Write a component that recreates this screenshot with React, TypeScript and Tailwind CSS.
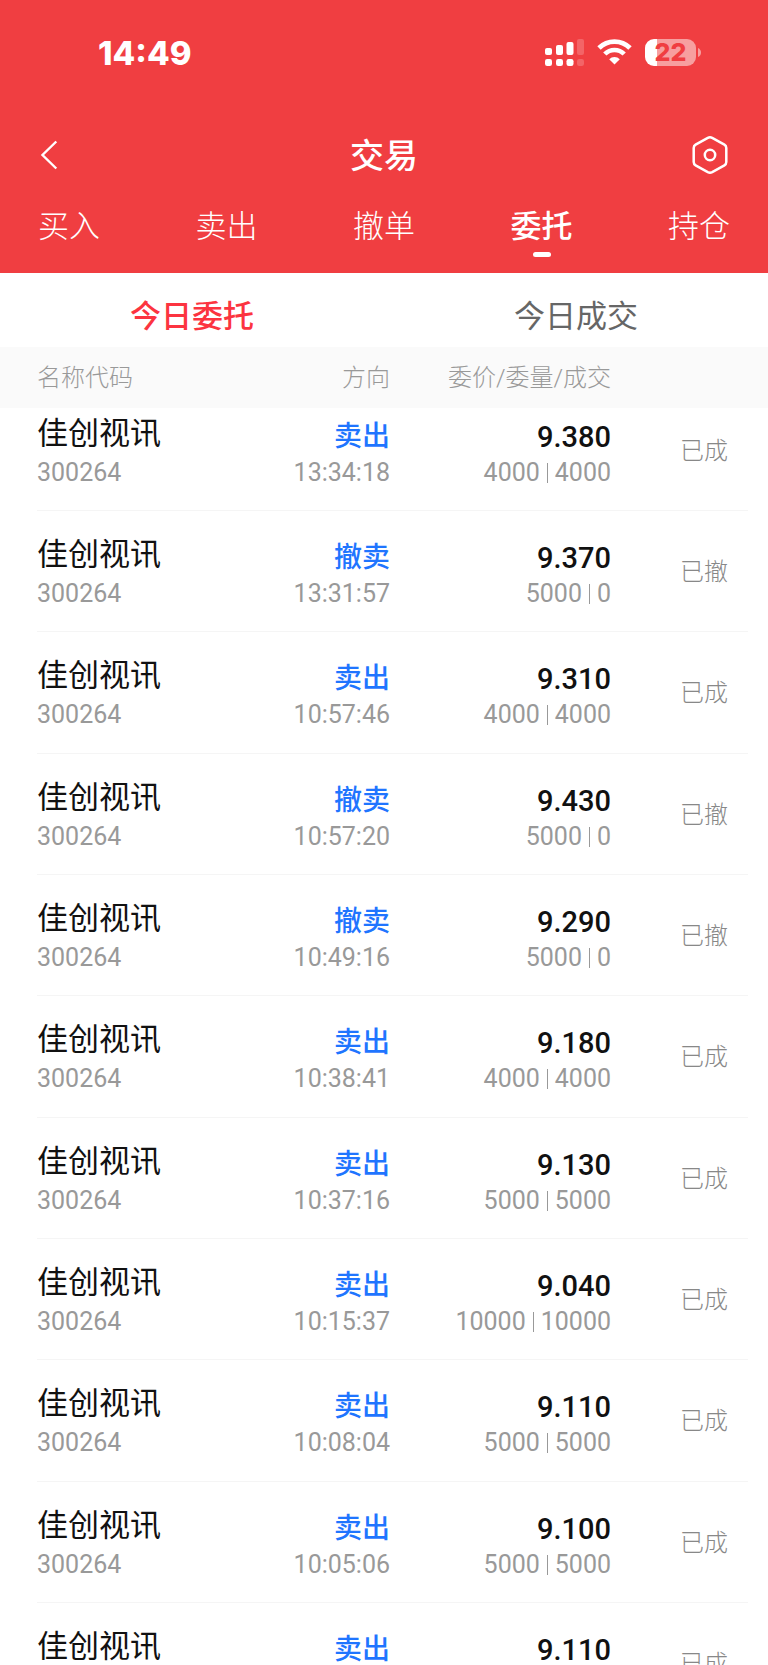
import { useState } from 'react';

type Order = {
  side: string;
  time: string;
  price: string;
  volume: string;
  filled: string;
  status: string;
};

const orders: Order[] = [
  { side: '卖出', time: '13:34:18', price: '9.380', volume: '4000', filled: '4000', status: '已成' },
  { side: '撤卖', time: '13:31:57', price: '9.370', volume: '5000', filled: '0', status: '已撤' },
  { side: '卖出', time: '10:57:46', price: '9.310', volume: '4000', filled: '4000', status: '已成' },
  { side: '撤卖', time: '10:57:20', price: '9.430', volume: '5000', filled: '0', status: '已撤' },
  { side: '撤卖', time: '10:49:16', price: '9.290', volume: '5000', filled: '0', status: '已撤' },
  { side: '卖出', time: '10:38:41', price: '9.180', volume: '4000', filled: '4000', status: '已成' },
  { side: '卖出', time: '10:37:16', price: '9.130', volume: '5000', filled: '5000', status: '已成' },
  { side: '卖出', time: '10:15:37', price: '9.040', volume: '10000', filled: '10000', status: '已成' },
  { side: '卖出', time: '10:08:04', price: '9.110', volume: '5000', filled: '5000', status: '已成' },
  { side: '卖出', time: '10:05:06', price: '9.100', volume: '5000', filled: '5000', status: '已成' },
  { side: '卖出', time: '10:02:31', price: '9.110', volume: '5000', filled: '5000', status: '已成' },
];

const sections = ['买入', '卖出', '撤单', '委托', '持仓'];
const views = ['今日委托', '今日成交'];

function SignalIcon() {
  return (
    <svg width="39" height="27" viewBox="0 0 39 27" fill="#fff" aria-hidden="true">
      <rect x="0" y="9" width="7" height="7" rx="2" />
      <rect x="11" y="6" width="7" height="10" rx="2" />
      <rect x="21.5" y="3" width="7" height="13" rx="2" />
      <rect x="32" y="0" width="7" height="16" rx="2" opacity="0.2" />
      <rect x="0" y="20" width="7" height="7" rx="2.2" />
      <rect x="11" y="20" width="7" height="7" rx="2.2" />
      <rect x="21.5" y="20" width="7" height="7" rx="2.2" />
      <rect x="32" y="20" width="7" height="7" rx="2.2" opacity="0.2" />
    </svg>
  );
}

function WifiIcon() {
  return (
    <svg width="35" height="26" viewBox="0 0 35 26" aria-hidden="true">
      <path d="M2 9 A22 22 0 0 1 33 9" fill="none" stroke="#fff" strokeWidth="4.8" />
      <path d="M7.8 15 A13.7 13.7 0 0 1 27.2 15" fill="none" stroke="#fff" strokeWidth="4.6" />
      <path d="M17.5 25.6 L12.2 20.3 A7.5 7.5 0 0 1 22.8 20.3 Z" fill="#fff" />
    </svg>
  );
}

function Battery() {
  return (
    <div className="flex items-center gap-0.5">
      <div className="flex h-[27px] w-[51px] items-center justify-center rounded-[9px] bg-[linear-gradient(to_right,#fff_12px,#f79f9f_12px)] font-[Inter] text-[25px] leading-none font-extrabold text-[#f03e41]">
        22
      </div>
      <svg width="3" height="9" viewBox="0 0 3 9" aria-hidden="true">
        <path d="M0 0 Q3 1.5 3 4.5 Q3 7.5 0 9 Z" fill="#f79f9f" />
      </svg>
    </div>
  );
}

export default function App() {
  const [section, setSection] = useState('委托');
  const [view, setView] = useState('今日委托');

  return (
    <div className="flex h-screen flex-col overflow-hidden bg-white font-['Roboto','Noto_Sans_CJK_SC',sans-serif]">
      <header className="shrink-0 bg-[#f03e41] text-white">
        <div className="flex h-[104px] items-center justify-between pr-[67px] pl-[98px]">
          <span className="pt-0.5 font-[Inter] text-[33px] leading-none font-extrabold">14:49</span>
          <div className="flex items-center gap-[13px]">
            <SignalIcon />
            <WifiIcon />
            <Battery />
          </div>
        </div>
        <div className="flex h-[100px] items-center justify-between px-10 pt-0.5">
          <button type="button" aria-label="返回" className="w-9">
            <svg width="18" height="30" viewBox="0 0 18 30" fill="none" stroke="#fff" strokeWidth="2.4" aria-hidden="true">
              <path d="M16.3 1.5 L2.5 15 L16.3 28.5" />
            </svg>
          </button>
          <h1 className="pt-0.5 text-[34px] leading-10 font-medium">交易</h1>
          <button type="button" aria-label="设置">
            <svg width="36" height="38" viewBox="0 0 36 38" fill="none" stroke="#fff" strokeWidth="2.5" aria-hidden="true">
              <path d="M15.8 1.9 Q18 0.8 20.2 1.9 L32.4 8.7 Q34.3 9.8 34.3 12 V26 Q34.3 28.2 32.4 29.3 L20.2 36.1 Q18 37.2 15.8 36.1 L3.6 29.3 Q1.7 28.2 1.7 26 V12 Q1.7 9.8 3.6 8.7 Z" />
              <circle cx="18" cy="19" r="5.2" />
            </svg>
          </button>
        </div>
        <nav className="flex h-[69px] justify-between px-[38px]">
          {sections.map((name) => (
            <button
              key={name}
              type="button"
              onClick={() => setSection(name)}
              className={
                'flex flex-col items-center gap-0.5 text-[31px] leading-[46px] ' +
                (name === section ? 'font-medium' : 'font-light')
              }
            >
              {name}
              {name === section && <span className="h-[5px] w-[18px] rounded-full bg-white" />}
            </button>
          ))}
        </nav>
      </header>

      <div className="grid h-[74px] shrink-0 grid-cols-2 pt-3.5">
        {views.map((name) => (
          <button
            key={name}
            type="button"
            onClick={() => setView(name)}
            className={
              'text-[31px] leading-10 ' +
              (name === view ? 'font-medium text-[#fc3440]' : 'font-normal text-[#666]')
            }
          >
            {name}
          </button>
        ))}
      </div>

      <div className="min-h-0 flex-1 overflow-y-auto [scrollbar-width:none]">
        <table className="-mt-[18px] w-full table-fixed border-separate border-spacing-0">
          <colgroup>
            <col />
            <col className="w-[140px]" />
            <col className="w-[221px]" />
            <col className="w-[157px]" />
          </colgroup>
          <thead className="sticky top-0 z-10 bg-[#fafafa] text-[24px] leading-8 text-[#999]">
            <tr className="h-[61px]">
              <th className="pl-[37px] text-left font-light">名称代码</th>
              <th className="text-right font-light">方向</th>
              <th className="text-right font-light whitespace-nowrap">委价/委量/成交</th>
              <th aria-label="状态" />
            </tr>
          </thead>
          <tbody>
            {orders.map((order) => (
              <tr key={order.time} className="relative h-[121px] nth-[3n]:h-[122px]">
                <td className="pt-0.5 pl-[37px] after:absolute after:right-5 after:bottom-0 after:left-[37px] after:h-px after:bg-[#f5f5f5]">
                  <div className="text-[31px] leading-[42px] text-[#111]">佳创视讯</div>
                  <div className="text-[25px] leading-9 text-[#999]">300264</div>
                </td>
                <td className="pt-0.5 text-right">
                  <div className="text-[28px] leading-[42px] font-medium text-[#1f75ff]">{order.side}</div>
                  <div className="text-[25px] leading-[30px] text-[#999]">{order.time}</div>
                </td>
                <td className="pt-0.5 text-right">
                  <div className="text-[29px] leading-[42px] font-medium text-[#111]">{order.price}</div>
                  <div className="flex items-center justify-end gap-[7px] text-[25px] leading-[30px] text-[#999]">
                    <span>{order.volume}</span>
                    <span className="h-5 w-px bg-[#999]" />
                    <span>{order.filled}</span>
                  </div>
                </td>
                <td className="pr-10 text-right text-[24px] leading-8 font-light text-[#888]">{order.status}</td>
              </tr>
            ))}
          </tbody>
        </table>
      </div>
    </div>
  );
}
